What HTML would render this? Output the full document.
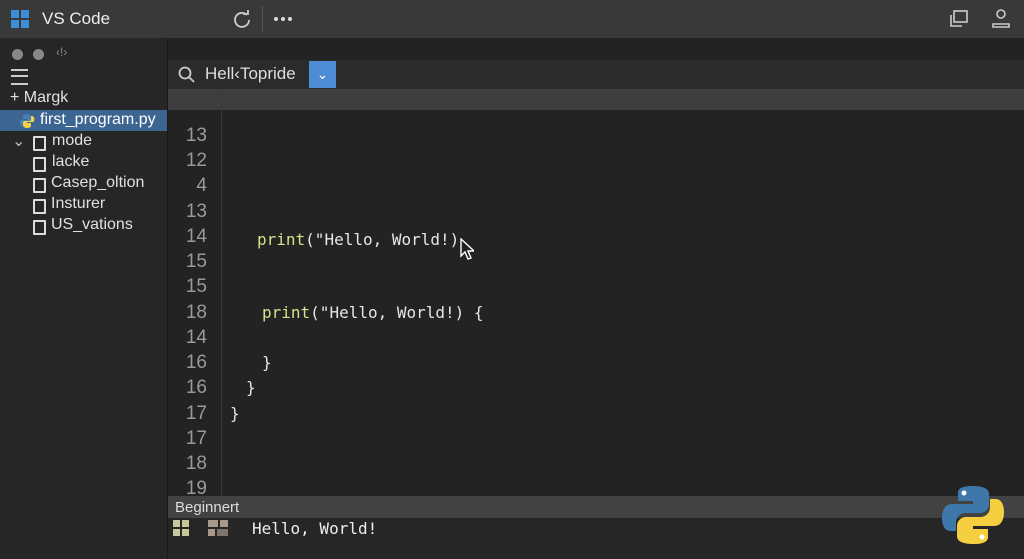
<!DOCTYPE html><html><head><style>
body{margin:0;width:1024px;height:559px;background:#232323;font-family:"Liberation Sans",sans-serif;color:#ddd;position:relative;overflow:hidden}
.a{position:absolute}
.ln{position:absolute;right:817px;font-size:19px;color:#9a9a9a;width:60px;text-align:right}
.code{position:absolute;font-family:"DejaVu Sans Mono","Liberation Mono",monospace;font-size:16px;color:#e6e6e6}
.fn{color:#d7e08a}
.side{font-size:16px;color:#e0e0e0}
.fi{position:absolute;width:9px;height:11px;border:2px solid #ddd;border-radius:1px;background:#262626}
</style></head><body>
<div class="a" style="left:0;top:0;width:1024px;height:38px;background:#393939"></div>
<svg class="a" style="left:11px;top:10px" width="19" height="19"><rect x="0" y="0" width="8" height="8" fill="#3b8fd9"/><rect x="10" y="0" width="8" height="8" fill="#3b8fd9"/><rect x="0" y="10" width="8" height="8" fill="#3b8fd9"/><rect x="10" y="10" width="8" height="8" fill="#3b8fd9"/></svg>
<div class="a" style="left:42px;top:9px;font-size:17px;color:#eee">VS Code</div>
<svg class="a" style="left:233px;top:10px" width="18" height="18" fill="none" stroke="#ccc" stroke-width="1.8"><path d="M14 5A7 7 0 1 0 16 10"/><path d="M10 4h5V0"/></svg>
<div class="a" style="left:262px;top:6px;width:1px;height:26px;background:#555"></div>
<div class="a" style="left:274px;top:17px;width:4px;height:4px;border-radius:50%;background:#ddd;box-shadow:7px 0 #ddd,14px 0 #ddd"></div>
<svg class="a" style="left:950px;top:10px" width="18" height="17" fill="none" stroke="#ccc" stroke-width="1.6"><rect x="4" y="1" width="13" height="11"/><path d="M1 5v11h11"/></svg>
<svg class="a" style="left:991px;top:8px" width="20" height="20" fill="none" stroke="#ccc" stroke-width="1.6"><circle cx="10" cy="6" r="4"/><path d="M2 19v-3h16v3z"/></svg>
<div class="a" style="left:0;top:38px;width:167px;height:521px;background:#262626;border-right:1px solid #1a1a1a"></div>
<div class="a" style="left:12px;top:49px;width:11px;height:11px;border-radius:50%;background:#888"></div>
<div class="a" style="left:33px;top:49px;width:11px;height:11px;border-radius:50%;background:#888"></div>
<div class="a" style="left:56px;top:45px;font-size:12px;color:#888">‹!›</div>
<div class="a" style="left:11px;top:69px;width:17px;height:12px;border-top:2px solid #ccc;border-bottom:2px solid #ccc"></div><div class="a" style="left:11px;top:75px;width:17px;height:2px;background:#ccc"></div>
<div class="a side" style="left:10px;top:89px">+ Margk</div>
<div class="a" style="left:0;top:110px;width:167px;height:21px;background:#3d6591"></div>
<svg class="a" style="left:19px;top:113px" width="16" height="16"><path d="M8 1c-4 0-4 2-4 3v2h4v1H2C0 7 0 13 3 13h1v-3c0-2 1-2 3-2h3c2 0 2-1 2-2V4c0-2-2-3-4-3z" fill="#4a7fb5"/><path d="M8 15c4 0 4-2 4-3v-2H8V9h6c2 0 2-6-1-6h-1v3c0 2-1 2-3 2H6c-2 0-2 1-2 2v2c0 2 2 3 4 3z" fill="#f2d34a"/></svg>
<div class="a side" style="left:40px;top:111px;color:#fff">first_program.py</div>
<div class="a side" style="left:12px;top:131px;color:#bbb">⌄</div>
<div class="fi" style="left:33px;top:136px"></div><div class="a side" style="left:52px;top:132px">mode</div>
<div class="fi" style="left:33px;top:157px"></div><div class="a side" style="left:52px;top:153px">lacke</div>
<div class="fi" style="left:33px;top:178px"></div><div class="a side" style="left:51px;top:174px">Casep_oltion</div>
<div class="fi" style="left:33px;top:199px"></div><div class="a side" style="left:51px;top:195px">Insturer</div>
<div class="fi" style="left:33px;top:220px"></div><div class="a side" style="left:51px;top:216px">US_vations</div>
<div class="a" style="left:168px;top:60px;width:856px;height:29px;background:#2b2b2b"></div>
<svg class="a" style="left:178px;top:66px" width="18" height="18" fill="none" stroke="#ccc" stroke-width="1.8"><circle cx="7" cy="7" r="5.5"/><path d="M11 11l5 5"/></svg>
<div class="a" style="left:205px;top:64px;font-size:17px;color:#ddd">Hell‹Topride</div>
<div class="a" style="left:309px;top:61px;width:27px;height:27px;background:#4d8bd4;color:#fff;text-align:center;font-size:14px;line-height:27px">⌄</div>
<div class="a" style="left:168px;top:89px;width:856px;height:21px;background:#3e3e3e"></div>
<div class="a" style="left:221px;top:89px;width:1px;height:407px;background:#3a3a3a"></div>
<div class="ln" style="top:125px">13</div><div class="ln" style="top:150px">12</div><div class="ln" style="top:175px">4</div><div class="ln" style="top:201px">13</div><div class="ln" style="top:226px">14</div><div class="ln" style="top:251px">15</div><div class="ln" style="top:276px">15</div><div class="ln" style="top:302px">18</div><div class="ln" style="top:327px">14</div><div class="ln" style="top:352px">16</div><div class="ln" style="top:377px">16</div><div class="ln" style="top:403px">17</div><div class="ln" style="top:428px">17</div><div class="ln" style="top:453px">18</div><div class="ln" style="top:478px">19</div>
<div class="code" style="left:257px;top:230px"><span class="fn">print</span>("Hello, World!)</div>
<svg class="a" style="left:460px;top:238px" width="14" height="22"><path d="M1 1v17l4-4 3 7 3-1-3-7h6z" fill="#222" stroke="#fff" stroke-width="1.4"/></svg>
<div class="code" style="left:262px;top:303px"><span class="fn">print</span>("Hello, World!) {</div>
<div class="code" style="left:262px;top:353px">}</div>
<div class="code" style="left:246px;top:378px">}</div>
<div class="code" style="left:230px;top:404px">}</div>
<div class="a" style="left:168px;top:496px;width:856px;height:22px;background:#424242"></div>
<div class="a" style="left:175px;top:499px;font-size:15px;color:#ddd">Beginnert</div>
<div class="a" style="left:168px;top:518px;width:856px;height:41px;background:#262626"></div>
<svg class="a" style="left:173px;top:520px" width="16" height="17"><rect x="0" y="0" width="7" height="7" fill="#c9c79a"/><rect x="9" y="0" width="7" height="7" fill="#c9c79a"/><rect x="0" y="9" width="7" height="7" fill="#c9c79a"/><rect x="9" y="9" width="7" height="7" fill="#c9c79a"/></svg>
<svg class="a" style="left:208px;top:520px" width="22" height="17"><rect x="0" y="0" width="10" height="7" fill="#a8998a"/><rect x="12" y="0" width="8" height="7" fill="#a8998a"/><rect x="0" y="9" width="7" height="7" fill="#a8998a"/><rect x="9" y="9" width="11" height="7" fill="#7d756d"/></svg>
<div class="code" style="left:252px;top:519px;color:#eee">Hello, World!</div>
<svg class="a" style="left:942px;top:484px" width="62" height="62"><path d="M30 2c-15 0-14 6-14 8v7h15v3H10C3 20 0 26 0 34s3 13 9 13h5v-8c0-6 4-10 10-10h14c5 0 9-4 9-9V10c0-5-5-8-17-8z" fill="#3e77aa"/><circle cx="22" cy="9" r="2.5" fill="#fff"/><path d="M32 60c15 0 14-6 14-8v-7H31v-3h21c7 0 10-6 10-14s-3-13-9-13h-5v8c0 6-4 10-10 10H24c-5 0-9 4-9 9v10c0 5 5 8 17 8z" fill="#f5cf3f"/><circle cx="40" cy="53" r="2.5" fill="#fff"/></svg>
</body></html>
